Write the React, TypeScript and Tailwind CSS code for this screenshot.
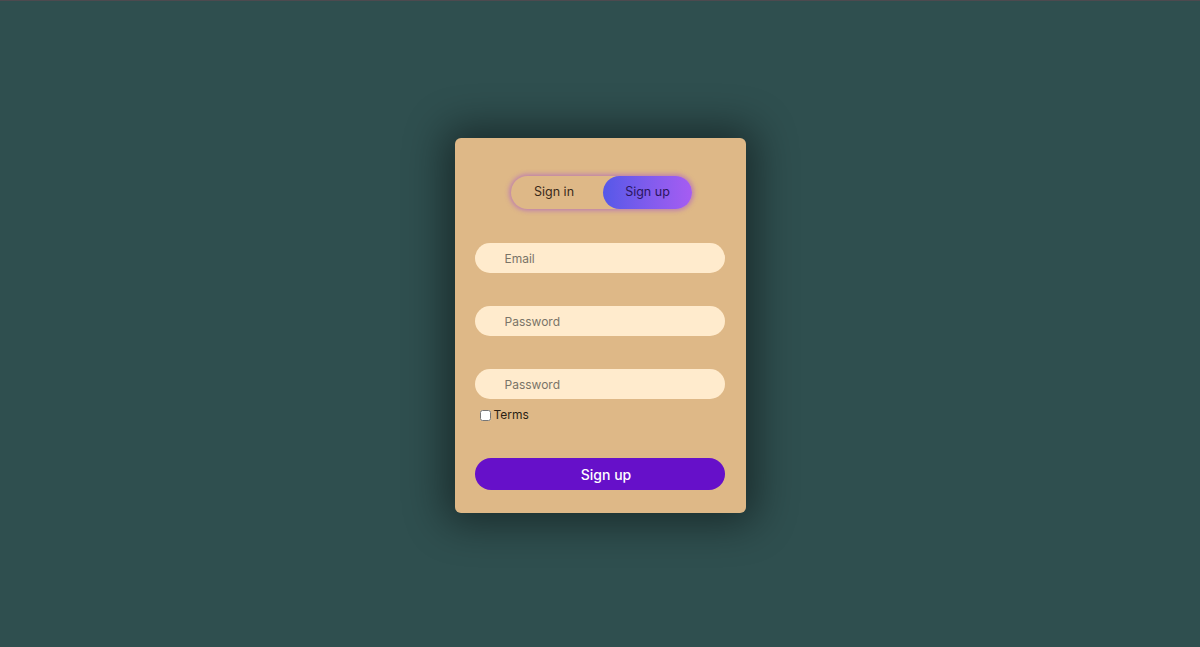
import React from "react";

export default function App() {
  return (
    <div
      className="w-full h-[647px] bg-[#2f4f4f] border-t border-[#4d4a4f] flex items-start justify-center"
      style={{ fontFamily: '"Inter", "Noto Sans", sans-serif' }}
    >
      <div className="mt-[137px] w-[291px] h-[375px] bg-[#deb887] rounded-[6px] shadow-[0_0_40px_10px_rgba(0,0,0,0.45)] flex flex-col px-[20px] pt-[38px]">
        <div className="self-center ml-[3px] w-[181px] h-[33px] rounded-full flex shadow-[0_0_4px_2px_rgba(170,90,200,0.55)]">
          <div className="w-[92px] pr-[6px] flex items-center justify-center text-[12.5px] text-[#3a2a1a]">
            Sign in
          </div>
          <div className="flex-1 rounded-full bg-gradient-to-r from-[#5558e8] to-[#a65cf2] flex items-center justify-center text-[12.5px] text-[#2a1660]">
            Sign up
          </div>
        </div>
        <input
          className="mt-[34px] w-[250px] h-[30px] rounded-full bg-[#ffebcd] pl-[30px] text-[12px] outline-none placeholder:text-[#7a7468]"
          placeholder="Email"
        />
        <input
          className="mt-[33px] w-[250px] h-[30px] rounded-full bg-[#ffebcd] pl-[30px] text-[12px] outline-none placeholder:text-[#7a7468]"
          placeholder="Password"
          type="password"
        />
        <input
          className="mt-[33px] w-[250px] h-[30px] rounded-full bg-[#ffebcd] pl-[30px] text-[12px] outline-none placeholder:text-[#7a7468]"
          placeholder="Password"
          type="password"
        />
        <label className="mt-[7px] ml-[5px] flex items-center gap-[3px] text-[12px] text-[#2a1f14]">
          <input type="checkbox" className="w-[11px] h-[11px] m-0" />
          Terms
        </label>
        <button className="mt-[34px] w-[250px] h-[32px] rounded-full bg-[#6610c9] pl-[13px] text-white text-[14px] font-medium">
          Sign up
        </button>
      </div>
    </div>
  );
}
